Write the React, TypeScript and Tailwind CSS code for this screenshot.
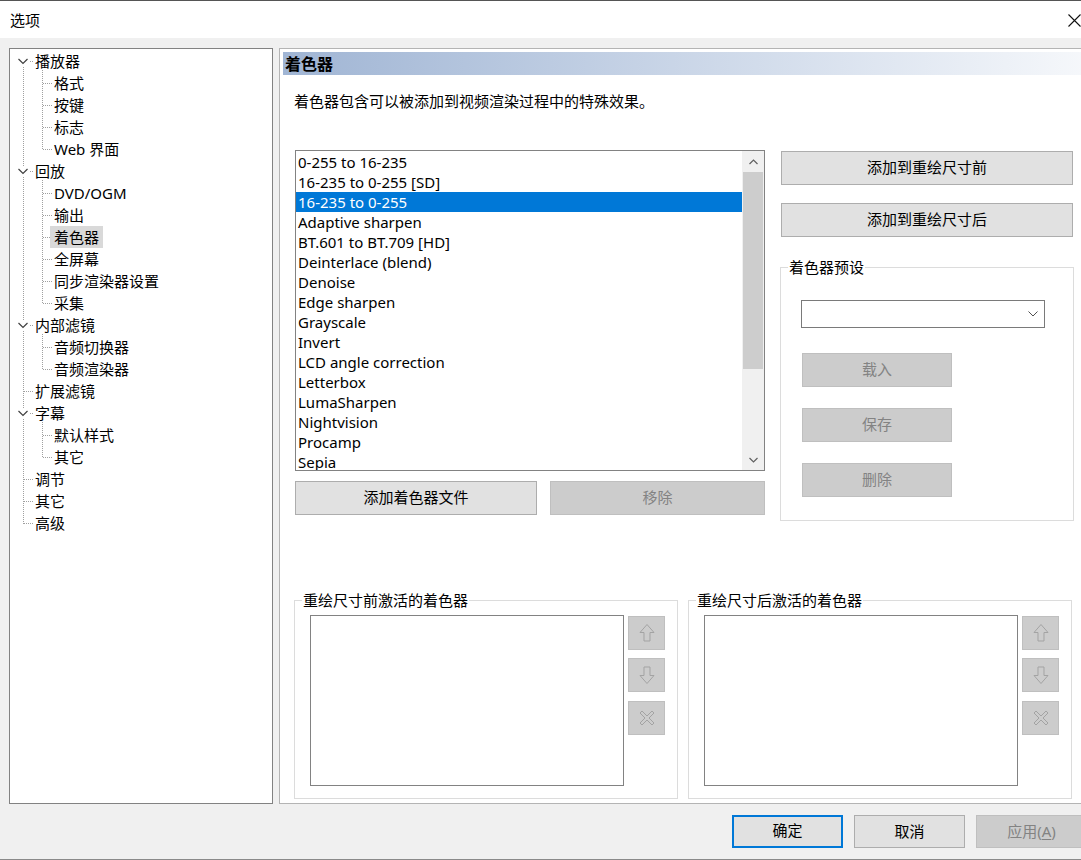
import React from "react";

const F = "font-['Noto_Sans','Noto_Sans_CJK_SC',sans-serif]";

type Node = { label: string; level: 0 | 1; expand?: boolean; selected?: boolean };

const tree: Node[] = [
  { label: "播放器", level: 0, expand: true },
  { label: "格式", level: 1 },
  { label: "按键", level: 1 },
  { label: "标志", level: 1 },
  { label: "Web 界面", level: 1 },
  { label: "回放", level: 0, expand: true },
  { label: "DVD/OGM", level: 1 },
  { label: "输出", level: 1 },
  { label: "着色器", level: 1, selected: true },
  { label: "全屏幕", level: 1 },
  { label: "同步渲染器设置", level: 1 },
  { label: "采集", level: 1 },
  { label: "内部滤镜", level: 0, expand: true },
  { label: "音频切换器", level: 1 },
  { label: "音频渲染器", level: 1 },
  { label: "扩展滤镜", level: 0 },
  { label: "字幕", level: 0, expand: true },
  { label: "默认样式", level: 1 },
  { label: "其它", level: 1 },
  { label: "调节", level: 0 },
  { label: "其它", level: 0 },
  { label: "高级", level: 0 },
];

const shaders = [
  "0-255 to 16-235",
  "16-235 to 0-255 [SD]",
  "16-235 to 0-255",
  "Adaptive sharpen",
  "BT.601 to BT.709 [HD]",
  "Deinterlace (blend)",
  "Denoise",
  "Edge sharpen",
  "Grayscale",
  "Invert",
  "LCD angle correction",
  "Letterbox",
  "LumaSharpen",
  "Nightvision",
  "Procamp",
  "Sepia",
];

const ry = (i: number) => 12 + 22 * i;

function TreeLines() {
  const groups: [number, number][] = [
    [0, 4],
    [5, 11],
    [12, 14],
    [16, 18],
  ];
  const dash = "1 1";
  const c = "#a0a0a0";
  const els: React.ReactNode[] = [];
  els.push(
    <line key="v0" x1={13.5} y1={ry(0)} x2={13.5} y2={ry(21) + 1} stroke={c} strokeDasharray={dash} />
  );
  tree.forEach((n, i) => {
    if (n.level === 0) {
      els.push(
        <line key={"h" + i} x1={14} y1={ry(i) + 0.5} x2={24} y2={ry(i) + 0.5} stroke={c} strokeDasharray={dash} />
      );
    } else {
      els.push(
        <line key={"h" + i} x1={33} y1={ry(i) + 0.5} x2={42} y2={ry(i) + 0.5} stroke={c} strokeDasharray={dash} />
      );
    }
  });
  groups.forEach(([p, last], k) => {
    els.push(
      <line key={"v1" + k} x1={32.5} y1={ry(p) + 9} x2={32.5} y2={ry(last) + 1} stroke={c} strokeDasharray={dash} />
    );
  });
  tree.forEach((n, i) => {
    if (n.expand) {
      const y = ry(i);
      els.push(<rect key={"r" + i} x={7} y={y - 5} width={12} height={11} fill="#fff" />);
      els.push(
        <path
          key={"c" + i}
          d={`M8.5 ${y - 2} L13 ${y + 2.5} L17.5 ${y - 2}`}
          fill="none"
          stroke="#404040"
          strokeWidth={1.2}
        />
      );
    }
  });
  return (
    <svg className="absolute left-0 top-0 pointer-events-none" width="262" height="500">
      {els}
    </svg>
  );
}

function Btn({
  children,
  disabled,
  className = "",
}: {
  children: React.ReactNode;
  disabled?: boolean;
  className?: string;
}) {
  return (
    <div
      className={
        "flex items-center justify-center border pb-[2px] text-[15px] leading-[20px] " +
        (disabled
          ? "bg-[#cccccc] border-[#bfbfbf] text-[#838383] "
          : "bg-[#e1e1e1] border-[#adadad] text-black ") +
        className
      }
    >
      {children}
    </div>
  );
}

function UpIcon() {
  return (
    <svg width="16" height="18" viewBox="0 0 16 18">
      <path d="M8 0.5 L15 8.5 L11 8.5 L11 17 L5 17 L5 8.5 L1 8.5 Z" fill="none" stroke="#a3a3a3" />
    </svg>
  );
}
function DownIcon() {
  return (
    <svg width="16" height="18" viewBox="0 0 16 18">
      <path d="M8 17.5 L15 9.5 L11 9.5 L11 1 L5 1 L5 9.5 L1 9.5 Z" fill="none" stroke="#a3a3a3" />
    </svg>
  );
}
function XIcon() {
  return (
    <svg width="16" height="16" viewBox="0 0 16 16">
      <path
        d="M3 1 L8 6 L13 1 L15 3 L10 8 L15 13 L13 15 L8 10 L3 15 L1 13 L6 8 L1 3 Z"
        fill="none"
        stroke="#a3a3a3"
      />
    </svg>
  );
}

function SmallBtn({ children, className = "" }: { children: React.ReactNode; className?: string }) {
  return (
    <div className={"w-[37px] h-[34px] bg-[#cccccc] border border-[#bfbfbf] flex items-center justify-center " + className}>
      {children}
    </div>
  );
}

function Group({
  label,
  className = "",
  children,
}: {
  label: string;
  className?: string;
  children?: React.ReactNode;
}) {
  return (
    <div className={"relative border border-[#dcdcdc] " + className}>
      <span className="absolute -top-[11px] left-[7px] px-[1px] bg-white text-[15px] leading-[20px] whitespace-nowrap">
        {label}
      </span>
      {children}
    </div>
  );
}

function ActiveGroup({ label }: { label: string }) {
  return (
    <Group label={label} className="w-[384px] h-[199px]">
      <div className="flex pl-[15px] pt-[14px]">
        <div className="w-[314px] h-[171px] border border-[#828282] bg-white" />
        <div className="ml-[4px] mt-[1px] flex flex-col">
          <SmallBtn>
            <UpIcon />
          </SmallBtn>
          <SmallBtn className="mt-[8px]">
            <DownIcon />
          </SmallBtn>
          <SmallBtn className="mt-[9px]">
            <XIcon />
          </SmallBtn>
        </div>
      </div>
    </Group>
  );
}

export default function App() {
  return (
    <div className={"w-[1081px] h-[860px] overflow-hidden bg-[#f0f0f0] border-b border-[#8a8a8a] text-black " + F}>
      <div className="w-[1097px]">
        {/* title bar */}
        <div className="h-[38px] bg-white border-t border-[#555555] flex items-center pl-[10px] relative">
          <span className="text-[15px] leading-[20px]">选项</span>
          <svg className="absolute left-[1068px] top-[13px]" width="13" height="13" viewBox="0 0 13 13">
            <path d="M0.5 0.5 L12.5 12.5 M12.5 0.5 L0.5 12.5" stroke="#111" strokeWidth="1.1" />
          </svg>
        </div>

        {/* body */}
        <div className="flex pt-[10px] pl-[9px]">
          {/* tree */}
          <div className="w-[264px] h-[756px] border border-[#828282] bg-white">
            <div className="relative pt-[1px]">
              <TreeLines />
              {tree.map((n, i) => (
                <div
                  key={i}
                  className={
                    "relative h-[22px] flex items-center text-[15px] leading-[22px] whitespace-nowrap " +
                    (n.level === 0 ? "pl-[25px]" : "pl-[40px]")
                  }
                >
                  <span className={n.level === 1 ? "px-[4px] " + (n.selected ? "bg-[#d9d9d9]" : "") : ""}>
                    {n.label}
                  </span>
                </div>
              ))}
            </div>
          </div>

          {/* right panel */}
          <div className="ml-[6px] w-[810px] h-[756px] border border-[#b4b4b4] bg-white">
            <div className="mt-[3px] ml-[3px] h-[23px] bg-linear-to-r from-[#a0b5d4] to-[#f6f8fb] flex items-center pl-[2px]">
              <span className="text-[16px] font-bold leading-[20px]">着色器</span>
            </div>
            <div className="mt-[16px] pl-[14px] h-[20px] text-[15px] leading-[20px]">
              着色器包含可以被添加到视频渲染过程中的特殊效果。
            </div>

            <div className="mt-[39px] pl-[15px] flex items-start">
              {/* left column */}
              <div className="w-[470px]">
                <div className="h-[321px] border border-[#828282] flex overflow-hidden">
                  <div className="flex-1 pt-[1px] overflow-hidden">
                    {shaders.map((s, i) => (
                      <div
                        key={i}
                        className={
                          "h-[20px] leading-[20px] text-[15px] pl-[2px] whitespace-nowrap " +
                          (i === 2 ? "bg-[#0078d7] text-white" : "")
                        }
                      >
                        {s}
                      </div>
                    ))}
                  </div>
                  <div className="w-[22px] bg-[#f0f0f0] flex flex-col">
                    <div className="h-[21px] flex items-center justify-center">
                      <svg width="9" height="6" viewBox="0 0 9 6">
                        <path d="M0.5 5 L4.5 1 L8.5 5" fill="none" stroke="#606060" strokeWidth="1.2" />
                      </svg>
                    </div>
                    <div className="h-[197px] mx-[1px] bg-[#cdcdcd]" />
                    <div className="flex-1" />
                    <div className="h-[21px] flex items-center justify-center">
                      <svg width="9" height="6" viewBox="0 0 9 6">
                        <path d="M0.5 1 L4.5 5 L8.5 1" fill="none" stroke="#606060" strokeWidth="1.2" />
                      </svg>
                    </div>
                  </div>
                </div>
                <div className="mt-[10px] flex">
                  <Btn className="w-[242px] h-[34px]">添加着色器文件</Btn>
                  <Btn disabled className="ml-[13px] w-[215px] h-[34px]">
                    移除
                  </Btn>
                </div>
              </div>

              {/* right column */}
              <div className="ml-[16px] w-[292px]">
                <Btn className="mt-[1px] h-[34px]">添加到重绘尺寸前</Btn>
                <Btn className="mt-[18px] h-[34px]">添加到重绘尺寸后</Btn>
                <Group label="着色器预设" className="mt-[30px] -ml-[1px] w-[294px] h-[254px]">
                  <div className="pl-[20px] pt-[32px]">
                    <div className="w-[244px] h-[28px] border border-[#7a7a7a] bg-white flex items-center justify-end pr-[6px]">
                      <svg width="10" height="6" viewBox="0 0 10 6">
                        <path d="M0.5 0.5 L5 5 L9.5 0.5" fill="none" stroke="#505050" strokeWidth="1" />
                      </svg>
                    </div>
                    <div className="ml-[1px]">
                      <Btn disabled className="mt-[25px] w-[150px] h-[34px]">
                        载入
                      </Btn>
                      <Btn disabled className="mt-[21px] w-[150px] h-[34px]">
                        保存
                      </Btn>
                      <Btn disabled className="mt-[21px] w-[150px] h-[34px]">
                        删除
                      </Btn>
                    </div>
                  </div>
                </Group>
              </div>
            </div>

            {/* bottom groups */}
            <div className="mt-[79px] pl-[14px] flex gap-[10px]">
              <ActiveGroup label="重绘尺寸前激活的着色器" />
              <ActiveGroup label="重绘尺寸后激活的着色器" />
            </div>
          </div>
        </div>

        {/* bottom buttons */}
        <div className="mt-[11px] flex justify-end pr-[10px] gap-[11px]">
          <div className="w-[111px] h-[33px] pb-[2px] bg-[#e1e1e1] border-2 border-[#0078d7] flex items-center justify-center text-[15px]">
            确定
          </div>
          <Btn className="w-[111px] h-[33px]">取消</Btn>
          <Btn disabled className="w-[111px] h-[33px]">
            应用(<span className="underline underline-offset-2">A</span>)
          </Btn>
        </div>
      </div>
    </div>
  );
}
